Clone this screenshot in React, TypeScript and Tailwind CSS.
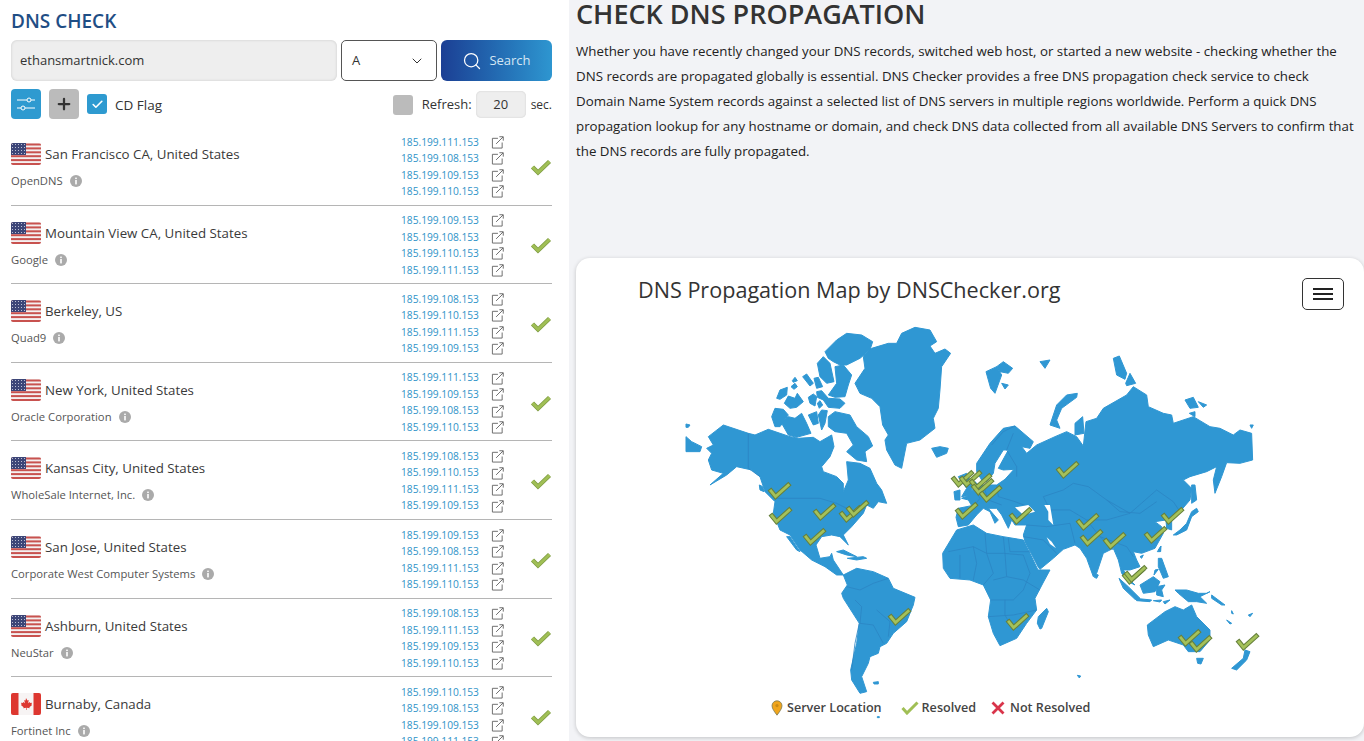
import { ChevronDown, Plus, Search, Check } from "lucide-react"

const rows = [
  { city: "San Francisco CA, United States", org: "OpenDNS", ips: [111, 108, 109, 110] },
  { city: "Mountain View CA, United States", org: "Google", ips: [109, 108, 110, 111] },
  { city: "Berkeley, US", org: "Quad9", ips: [108, 110, 111, 109] },
  { city: "New York, United States", org: "Oracle Corporation", ips: [111, 109, 108, 110] },
  { city: "Kansas City, United States", org: "WholeSale Internet, Inc.", ips: [108, 110, 111, 109] },
  { city: "San Jose, United States", org: "Corporate West Computer Systems", ips: [109, 108, 111, 110] },
  { city: "Ashburn, United States", org: "NeuStar", ips: [108, 111, 109, 110] },
  { city: "Burnaby, Canada", org: "Fortinet Inc", ips: [110, 108, 109, 111], canada: true },
]

// each group of shapes is traced in the coordinates of a 3x crop of the map
const northAmerica = [
  "650,70 665,40 705,22 750,30 770,65 750,78 765,100 795,87 812,100 785,140 780,210 775,265 760,295 765,325 720,360 680,370 665,445 645,435 620,390 615,360 625,345 608,315 600,260 575,235 540,220 525,190 555,145 550,110 575,85 625,70",
  "435,95 470,60 500,40 545,45 578,65 570,90 540,115 500,135 480,135 460,125 445,115",
  "412,130 430,110 450,130 462,185 440,190 420,170",
  "445,225 470,190 465,140 490,135 515,165 505,195 495,230 465,232",
  "290,235 300,210 322,202 320,225 300,238",
  "313,250 325,228 345,235 352,220 370,245 350,262 330,265",
  "333,200 345,190 352,200 342,208",
  "337,182 345,172 352,182 340,187",
  "368,170 380,162 400,190 390,198",
  "402,175 415,172 428,200 410,205",
  "385,232 400,222 410,230 405,258 390,250",
  "412,250 420,242 428,255 418,265",
  "410,215 425,212 445,235 480,237 495,250 480,265 445,262 430,240 412,232",
  "275,290 285,265 310,268 325,285 300,320 285,320",
  "305,310 325,290 345,295 365,280 380,310 393,340 350,352 325,345",
  "385,285 410,275 415,310 400,315",
  "415,285 425,270 442,272 435,310 425,330",
  "445,290 465,275 510,285 530,320 565,350 578,378 555,395 560,425 530,420 500,395 520,375 500,340 465,335 445,320",
  "18,350 35,365 65,380 60,395 18,395",
  "18,312 30,315 25,322 18,322",
  "755,385 780,380 805,385 800,400 770,412",
  "835,470 860,460 875,490 875,525 845,530 860,505",
  "822,515 840,510 840,540 825,540",
  "80,385 100,375 85,350 130,315 205,340 225,345 265,328 330,350 355,355 400,352 420,365 455,345 462,380 450,410 425,440 430,455 470,470 490,490 490,515 505,480 500,425 540,430 570,445 590,490 605,510 620,550 595,545 580,565 560,555 550,580 515,620 490,645 505,675 480,650 455,645 425,650 408,675 420,715 450,710 455,700 460,720 490,765 470,765 435,740 395,720 360,690 330,645 300,630 280,580 285,545 255,515 240,470 215,450 170,440 140,465 90,495 130,460 95,450 85,420 95,400",
  "320,650 330,650 360,695 350,690",
  "470,695 490,690 530,710 500,705",
  "502,715 550,710 560,715 530,720",
  "238,495 248,500 252,515 240,510",
]
const southAmerica = [
  "250,195 290,175 340,185 385,205 400,235 465,262 460,285 440,335 400,370 380,400 360,410 355,430 330,440 325,460 305,500 320,545 300,550 275,510 272,480 290,400 298,340 250,265 245,250 262,225",
  "340,517 355,515 355,522 342,522",
  "352,620 358,620 358,623 352,623",
  "548,130 590,60 640,45 680,70 730,80 790,90 810,130 834,180 870,180 849,219 825,265 830,300 800,340 770,385 720,407 700,370 685,320 692,270 670,225 630,210 570,205 550,175",
]
const eurasia = [
  "50,430 90,370 130,325 165,318 220,365 210,385 185,380 200,400 230,375 285,350 320,335 350,350 370,378 378,305 410,295 430,265 500,225 520,200 560,225 565,260 610,280 635,285 640,310 700,290 750,320 780,325 820,345 840,330 875,340 878,420 840,430 800,428 785,470 765,520 760,480 770,440 740,455 690,470 670,480 695,505 690,540 660,575 635,600 635,630 620,625 618,600 585,605 605,620 610,640 585,685 545,700 520,695 530,720 540,740 510,750 490,750 510,780 525,795 505,785 485,760 475,720 460,685 430,700 410,760 400,770 380,715 360,685 345,675 310,688 280,715 240,748 235,742 195,665 190,645 200,615 165,615 155,600 145,625 125,585 110,565 85,565 115,600 105,610 90,575 70,565 50,585 25,615 -5,620 -12,592 -5,565 35,557 25,540 5,535 30,525 40,505 45,485 55,495 70,495 110,495 135,478 162,448 130,450 115,445 145,390 130,390 105,430 100,460 80,485 65,480 50,455",
  "78,155 110,140 125,165 105,220 92,205",
  "110,140 130,125 158,145 145,160 120,155",
  "125,190 145,195 135,207",
  "240,125 270,120 255,145",
  "270,315 290,255 320,225 352,220 350,232 305,265 290,300 300,325",
  "345,310 368,290 372,340 345,345",
  "460,115 478,108 500,160 495,178 470,165",
  "497,190 510,160 527,190 500,197",
  "675,240 700,232 715,262 690,265",
  "715,245 740,255 730,262",
  "688,280 705,275 705,290",
  "870,315 880,315 875,325",
  "695,495 705,495 710,540 695,550",
  "640,645 660,630 680,610 695,575 710,565 715,575 695,590 680,630 650,645",
  "592,695 602,680 600,695",
  "540,710 550,705 545,715",
]
const oceania = [
  "237,205 265,230 300,265 285,268 250,235",
  "285,265 335,270 330,275 290,272",
  "340,272 365,270 360,276",
  "370,275 390,270 375,282",
  "300,225 340,200 360,215 345,245 310,250",
  "350,230 375,225 365,240 370,260 350,255",
  "355,145 365,145 385,200 370,205 355,170",
  "345,180 355,178 342,195",
  "405,240 440,240 475,250 500,250 510,245 480,260 500,280 470,275 445,275 415,250",
  "515,255 555,285 545,285 515,265",
  "322,345 375,305 405,290 430,300 455,285 470,320 510,360 510,390 480,425 445,425 430,405 385,390 340,410 325,375",
  "470,445 490,445 483,462 473,460",
  "575,475 610,445 615,420 630,425 620,450 590,480",
  "560,330 575,340 570,342",
  "625,315 638,310 630,320",
  "575,302 580,312 575,310",
  "162,190 175,195 170,205 163,202",
  "355,120 363,108 362,125",
  "112,496 122,498 118,504",
  "20,295 25,305 5,355 0,357 -8,340 -5,320",
]

const borders2 = [
  "205,340 205,445 240,470",
  "285,535 420,535 470,550 510,570",
]
const borders4 = [
  "285,270 305,290 300,340 340,345 370,400",
  "260,230 300,240 340,220 385,205",
  "298,340 285,400 275,480",
  "350,300 390,335 385,380",
  "565,125 640,110 680,130 730,130 790,135",
  "600,135 600,205",
  "640,110 650,160 640,210",
  "680,130 700,190 670,225",
  "730,80 735,130 740,200 700,210",
  "675,70 680,130",
  "745,85 750,125 810,125",
  "740,200 790,210 840,240",
  "692,270 760,270 790,240",
  "685,320 760,315 830,300",
  "735,270 735,315 760,360",
  "790,135 810,190 790,240",
]
const borders3 = [
  "95,375 130,335 165,318",
  "160,340 140,390 170,440 170,470",
  "110,495 115,530 165,545 205,560",
  "40,505 60,535 40,560",
  "70,495 85,540 125,555",
  "-5,565 10,590",
  "250,530 310,510 340,490 385,500 440,540 510,580 590,510 640,545 660,575",
  "440,540 480,575 540,580 590,545",
  "250,530 270,570 330,570 380,600",
  "380,600 440,600 510,580",
  "380,600 420,650 460,690",
  "420,650 500,680 520,710",
  "260,620 330,610 345,670",
  "200,615 260,620",
  "190,650 250,660 290,700",
]

const checks = [
  [779, 492], [780, 517], [824, 513], [850, 515], [857, 510], [814, 538], [962, 480], [970, 480], [980, 483],
  [982, 488], [990, 495], [966, 512], [1020, 517], [1067, 471], [1087, 523], [1091, 539], [1114, 542],
  [1155, 536], [1172, 517], [1133, 577], [1135, 575], [899, 618], [1017, 623], [1189, 639], [1200, 645], [1247, 643],
]

function Land({ x, y, shapes, lines }: { x: number; y: number; shapes: string[]; lines?: string[] }) {
  return (
    <g transform={`translate(${x} ${y}) scale(0.3333)`}>
      {shapes.map((p, i) => (
        <polygon key={i} points={p} fill="#2f97d3" stroke="#2f97d3" strokeWidth="3" strokeLinejoin="round" />
      ))}
      {lines?.map((p, i) => (
        <polyline key={i} points={p} fill="none" stroke="#2b86c4" strokeWidth="2.5" />
      ))}
    </g>
  )
}

function WorldMap() {
  return (
    <svg viewBox="686 326 568 370" className="ml-[110px] block h-[370px] w-[568px] overflow-visible">
      <Land x={680} y={320} shapes={northAmerica} lines={borders2} />
      <Land x={760} y={510} shapes={southAmerica} lines={borders4} />
      <Land x={960} y={320} shapes={eurasia} lines={borders3} />
      <Land x={1040} y={510} shapes={oceania} />
      <g transform="translate(960 320) scale(0.3333)">
        <polygon points="165,562 205,555 225,575 190,585" fill="#fff" />
        <polygon points="253,555 270,555 280,615 265,600 265,575" fill="#fff" />
        <polygon points="260,652 275,665 288,685 270,672" fill="#fff" />
      </g>
      {checks.map(([x, y], i) => (
        <g key={i} transform={`translate(${x} ${y}) scale(1.15)`} fill="none" strokeLinecap="square">
          <path d="M-7 -1 L-3 4 L8 -6" stroke="#66803c" strokeWidth="4.2" />
          <path d="M-7 -1 L-3 4 L8 -6" stroke="#a4c15a" strokeWidth="2.4" />
        </g>
      ))}
    </svg>
  )
}

function UsFlag() {
  return (
    <svg viewBox="0 0 30 22" className="h-[22px] w-[30px] shrink-0 rounded-[2px]">
      <rect width="30" height="22" fill="#f4f0f0" />
      {[0, 1, 2, 3, 4, 5].map((i) => (
        <rect key={i} y={i * 3.9 + 0.5} width="30" height="2" fill="#c8524f" />
      ))}
      <rect width="15" height="12" fill="#3d4678" />
      {[2, 5, 8, 11, 14].map((x) =>
        [2, 5, 8, 11].map((y) => <circle key={x + "-" + y} cx={x - 0.5} cy={y - 0.5} r="0.55" fill="#d4d6e4" />)
      )}
    </svg>
  )
}

function CaFlag() {
  return (
    <svg viewBox="0 0 30 22" className="h-[22px] w-[30px] shrink-0 rounded-[2px]">
      <rect width="30" height="22" fill="#f7f4f4" />
      <rect width="7.5" height="22" fill="#dd3730" />
      <rect x="22.5" width="7.5" height="22" fill="#dd3730" />
      <path
        d="M15 5l1.4 2.6 1.3-.6-.5 3.2 1.6-1.3.5 1.1 1.7-.2-.6 1.8.7.4-2.7 2.2.3 1-2.9-.4V17h-.6v-2.2l-2.9.4.3-1-2.7-2.2.7-.4-.6-1.8 1.7.2.5-1.1 1.6 1.3-.5-3.2 1.3.6z"
        fill="#dd3730"
      />
    </svg>
  )
}

function InfoDot() {
  return (
    <svg viewBox="0 0 12 12" className="ml-[7px] h-3 w-3 shrink-0">
      <circle cx="6" cy="6" r="6" fill="#aaaaaa" />
      <rect x="5.2" y="5" width="1.6" height="4.4" fill="#fff" />
      <rect x="5.2" y="2.6" width="1.6" height="1.5" fill="#fff" />
    </svg>
  )
}

function OutLink() {
  return (
    <svg viewBox="0 0 14 14" className="h-[13px] w-[13px]" fill="none" stroke="#666" strokeWidth="1">
      <path d="M7.5 2.5H1.5v10.5H12V7" />
      <path d="M5.5 8.5 13 1M9 .8h4.2V5" />
    </svg>
  )
}

function BigCheck() {
  return (
    <svg viewBox="0 0 22 18" className="h-[18px] w-[22px]" fill="none">
      <path d="M2.5 9 L8 14.5 L19.5 3.5" stroke="#7f9c45" strokeWidth="4.4" />
      <path d="M2.5 9 L8 14.5 L19.5 3.5" stroke="#a0bf55" strokeWidth="2.8" />
    </svg>
  )
}

function Row({ row }: { row: (typeof rows)[number] }) {
  return (
    <div className="flex h-[78.6px] shrink-0 border-b border-[#b5b5b5]">
      <div className="flex-1 pt-[16px]">
        <div className="flex items-center gap-[4px]">
          {row.canada ? <CaFlag /> : <UsFlag />}
          <span className="text-[13.3px] leading-[22px] text-[#3a3a3a]">{row.city}</span>
        </div>
        <div className="mt-[7px] flex items-center text-[11.25px] leading-[18px] text-[#555]">
          {row.org}
          <InfoDot />
        </div>
      </div>
      <div className="w-[103px] pt-[7px]">
        {row.ips.map((ip, i) => (
          <div key={i} className="flex h-[16.5px] items-center justify-between">
            <span className="text-[10.2px] text-[#2f93c8]">185.199.{ip}.153</span>
            <OutLink />
          </div>
        ))}
      </div>
      <div className="flex w-[48px] items-center justify-end pt-[2px]">
        <BigCheck />
      </div>
    </div>
  )
}

export default function App() {
  return (
    <div className="flex h-screen overflow-hidden bg-[#f2f3f6] font-['Open_Sans',sans-serif] text-[#333]">
      <div className="flex w-[569px] shrink-0 flex-col bg-white pl-[11px] pr-[17px]">
        <h2 className="mt-[8px] text-[19px] font-semibold leading-[26px] text-[#1f4e85]">DNS CHECK</h2>
        <div className="mt-[6px] flex h-[41px] shrink-0 gap-[4px]">
          <div className="flex flex-1 items-center rounded-[6px] bg-[#eeeeee] pl-[9px] pt-[1px] text-[13px] text-[#333] shadow-[inset_0_0_3px_rgba(0,0,0,0.15)]">
            ethansmartnick.com
          </div>
          <div className="flex w-[96px] items-center justify-between rounded-[5px] border border-[#555] pl-[10px] pr-[11px] text-[13px]">
            A
            <ChevronDown size={16} strokeWidth={1.5} />
          </div>
          <div className="flex w-[111px] items-center justify-center gap-[7px] rounded-[6px] bg-gradient-to-r from-[#1c3f94] to-[#2e96d0] text-[13px] text-[#d5e6f4]">
            <Search size={20} strokeWidth={1.5} color="#fff" />
            Search
          </div>
        </div>
        <div className="mt-[8px] flex h-[30px] shrink-0 items-center">
          <div className="flex h-[30px] w-[30px] items-center justify-center rounded-[4px] bg-[#2e9ad0]">
            <svg viewBox="0 0 20 18" className="h-[18px] w-5" fill="none" stroke="#fff" strokeWidth="1">
              <path d="M1 5h10M15 5h4M1 13h4M9 13h10" />
              <circle cx="13" cy="5" r="2" />
              <circle cx="7" cy="13" r="2" />
            </svg>
          </div>
          <div className="ml-[8px] flex h-[30px] w-[30px] items-center justify-center rounded-[4px] bg-[#bbbbbb]">
            <Plus size={18} strokeWidth={3} color="#333" />
          </div>
          <div className="ml-[8px] flex h-5 w-5 items-center justify-center rounded-[3px] bg-[#2e9ad0]">
            <Check size={13} strokeWidth={3} color="#fff" />
          </div>
          <span className="ml-[8px] pt-[2px] text-[13.5px]">CD Flag</span>
          <div className="ml-auto mt-[2px] h-5 w-5 rounded-[3px] bg-[#bbbbbb]" />
          <span className="ml-[9px] pt-[2px] text-[13px]">Refresh:</span>
          <div className="ml-[4px] flex h-[27px] w-[50px] items-center justify-center rounded-[5px] bg-[#eeeeee] pt-[2px] text-[13px] shadow-[inset_0_0_2px_rgba(0,0,0,0.15)]">
            20
          </div>
          <span className="ml-[5px] pt-[2px] text-[12px]">sec.</span>
        </div>
        <div className="mt-[8px] flex flex-col">
          {rows.map((row) => (
            <Row key={row.city} row={row} />
          ))}
        </div>
      </div>
      <div className="flex min-w-0 flex-1 flex-col pl-[7px]">
        <h1 className="text-[27px] font-semibold leading-[28px] text-[#333]">CHECK DNS PROPAGATION</h1>
        <p className="mt-[11px] h-[219px] shrink-0 whitespace-nowrap text-[13.3px] leading-[25px] text-[#222]">
          Whether you have recently changed your DNS records, switched web host, or started a new website - checking whether the
          <br />
          DNS records are propagated globally is essential. DNS Checker provides a free DNS propagation check service to check
          <br />
          Domain Name System records against a selected list of DNS servers in multiple regions worldwide. Perform a quick DNS
          <br />
          propagation lookup for any hostname or domain, and check DNS data collected from all available DNS Servers to confirm that
          <br />
          the DNS records are fully propagated.
        </p>
        <div className="h-[479px] shrink-0 rounded-[14px] bg-white shadow-[0_1px_4px_rgba(0,0,0,0.2)]">
          <div className="flex h-[68px] items-start justify-between pl-[62px] pr-[20px] pt-[19px]">
            <span className="text-[21.6px] font-medium leading-[26px] text-[#333]">DNS Propagation Map by DNSChecker.org</span>
            <div className="mt-[1px] flex h-[32px] w-[42px] flex-col items-center justify-center gap-[3px] rounded-[5px] border border-[#333]">
              <div className="h-[2px] w-5 bg-[#222]" />
              <div className="h-[2px] w-5 bg-[#222]" />
              <div className="h-[2px] w-5 bg-[#222]" />
            </div>
          </div>
          <WorldMap />
          <div className="mt-[3px] flex items-center pl-[195px] text-[12.6px] font-semibold leading-[18px] text-[#444]">
            <svg viewBox="0 0 12 16" className="h-4 w-3">
              <path d="M6 .8a5 5 0 0 1 5 5c0 3.2-3 6.5-5 9.4-2-2.9-5-6.2-5-9.4a5 5 0 0 1 5-5z" fill="#f0a51c" stroke="#7a7a55" strokeWidth=".8" />
              <circle cx="6" cy="5.6" r="1.6" fill="#c98a15" />
            </svg>
            <span className="ml-[4px]">Server Location</span>
            <svg viewBox="0 0 18 14" className="ml-[19px] h-[14px] w-[18px]" fill="none">
              <path d="M1.5 7 L6 12 L16.5 1.5" stroke="#a0bf55" strokeWidth="3" />
            </svg>
            <span className="ml-[3px]">Resolved</span>
            <svg viewBox="0 0 14 14" className="ml-[15px] h-[14px] w-[14px]" fill="none">
              <path d="M1.5 1.5 12.5 12.5M12.5 1.5 1.5 12.5" stroke="#d9344a" strokeWidth="2.8" />
            </svg>
            <span className="ml-[5px]">Not Resolved</span>
          </div>
        </div>
      </div>
    </div>
  )
}
